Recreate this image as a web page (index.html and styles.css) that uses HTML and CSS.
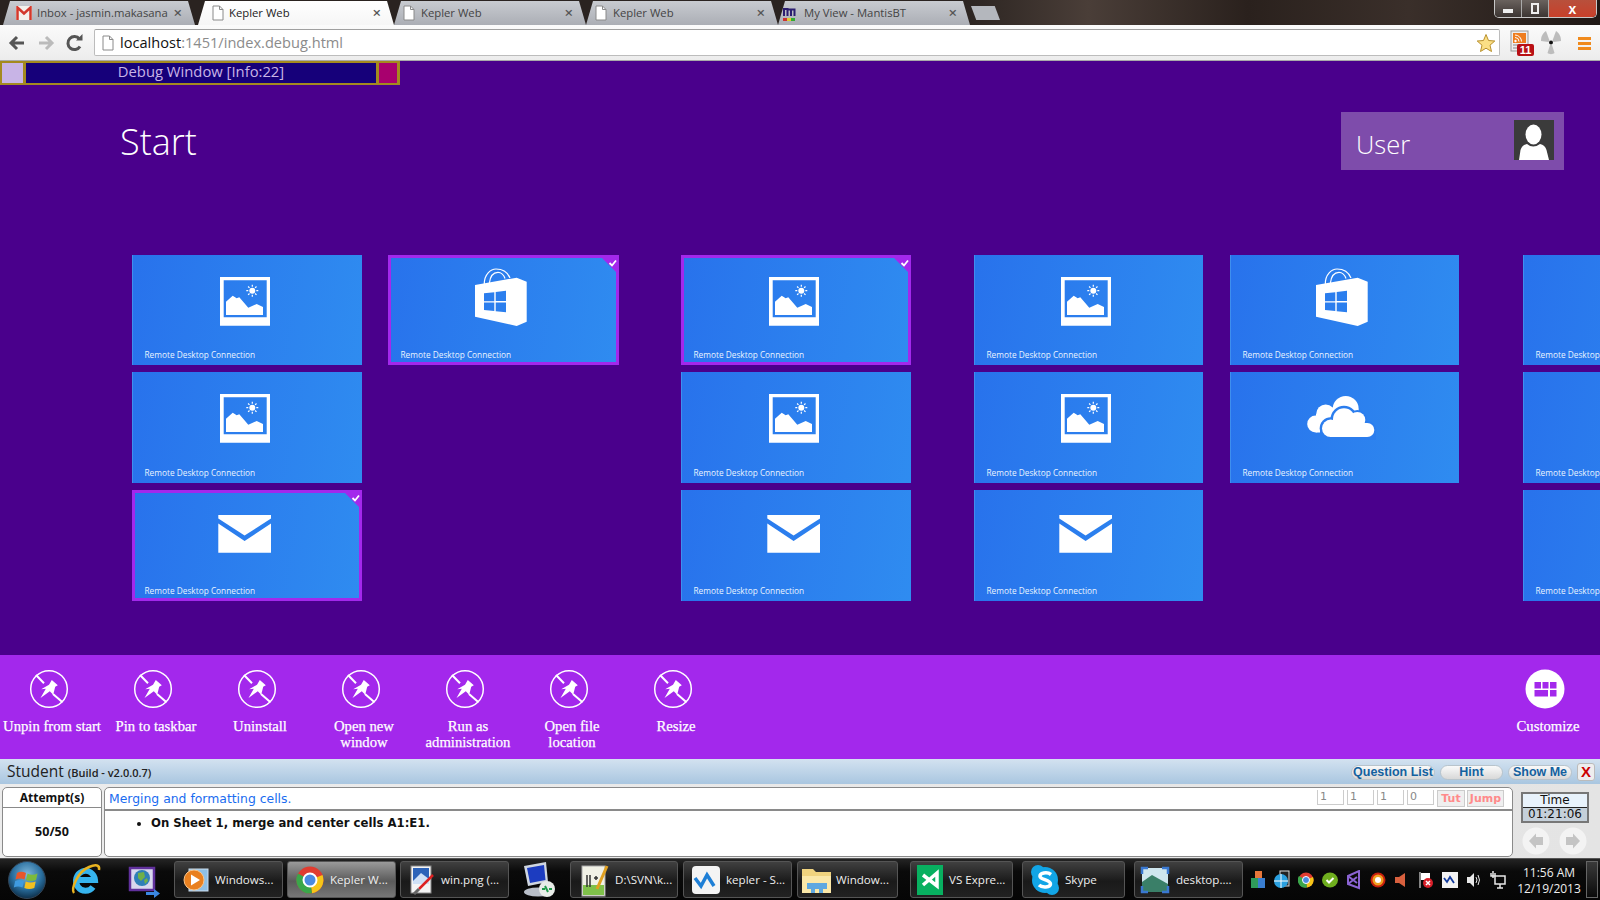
FILE: index.html
```html
<!DOCTYPE html>
<html lang="en">
<head>
    <meta charset="UTF-8">
    <title>Kepler Web</title>
    <link rel="stylesheet" href="styles.css">
</head>
<body>
    <svg class="defs" width="0" height="0">
        <symbol id="ic-photo" viewBox="0 0 72 72">
            <path fill="#fff" fill-rule="evenodd" d="M11 13h50v48.7H11z M14.7 16.3v37h43v-37z"/>
            <path fill="#fff" d="M17 37.7 23.7 31.7 27.7 34.3 30.3 33.3 39.3 43.7 47.7 40 54 43V51H17z"/>
            <circle cx="43.3" cy="26.7" r="3" fill="#fff"/>
            <path stroke="#fff" stroke-width="1.2" d="M43.3 20.7v2M43.3 30.700v2M37.300 26.700h2M47.300 26.700h2M39.100 22.500l1.400 1.400M46.100 29.500l1.400 1.400M47.500 22.500l-1.400 1.400M40.500 29.500l-1.400 1.400"/>
        </symbol>
        <symbol id="ic-store" viewBox="0 0 72 72">
            <path fill="#fff" fill-rule="evenodd" d="M10 21 51.700 13.700 61.700 17.700V57.700L51.700 62 10 52.700z M19 29.300V37.300H29.300V28.200z M30.700 28V37H41V26.700z M19 38.500V46L29.300 47V38.500z M30.700 38.500V47.200L41 48.300V38.500z"/>
            <path fill="none" stroke="#fff" stroke-width="1.2" d="M19.300 20.500C19 10 26 5 31 5 38 5 43 9 45 14M24.300 19.500C25 13 28 8.300 33 8.300 36 8.300 39 11 40 14.500"/>
        </symbol>
        <symbol id="ic-mail" viewBox="0 0 72 72">
            <path fill="#fff" d="M9.300 16H62V19.500L35.600 36.500 9.300 19.500z"/>
            <path fill="#fff" d="M9.300 24.500 35.600 42 62 24.500V53.700H9.300z"/>
        </symbol>
        <symbol id="ic-cloud" viewBox="0 0 72 72">
            <g fill="#fff">
                <circle cx="39.700" cy="28" r="13"/>
                <circle cx="19.700" cy="33" r="9.500"/>
                <circle cx="9.700" cy="43" r="8.500"/>
                <rect x="10" y="33" width="30" height="18.500"/>
            </g>
            <g fill="#2b7dee">
                <circle cx="38" cy="38.300" r="13.500"/>
                <circle cx="51.300" cy="39" r="10"/>
                <circle cx="24.700" cy="47.300" r="11"/>
                <circle cx="61.300" cy="49" r="9"/>
                <rect x="14" y="47" width="56" height="12"/>
            </g>
            <g fill="#fff">
                <circle cx="38" cy="38.300" r="11"/>
                <circle cx="51.300" cy="39" r="8"/>
                <circle cx="24.700" cy="47.300" r="8.700"/>
                <circle cx="61.300" cy="49" r="7"/>
                <rect x="24" y="42" width="37" height="14"/>
            </g>
        </symbol>
        <symbol id="ic-pin" viewBox="-20 -20 40 40">
            <circle r="18.300" fill="none" stroke="#fff" stroke-width="1.500"/>
            <path stroke="#fff" stroke-width="2" d="M-13-14-5-5.700M4 5 13.500 13.300"/>
            <path fill="#fff" d="M2.800-9 8.800-3.700 6.200-2.300 4.200 5.700 .8 2.300-8.500 9-3.200-.3-7.800.3 0-4.300z"/>
        </symbol>
        <symbol id="ic-page" viewBox="0 0 12 16">
            <path fill="#fff" stroke="#8a8a8a" d="M1 1h6.500L11 4.500V15H1z"/>
            <path fill="none" stroke="#8a8a8a" d="M7.500 1v3.500H11"/>
        </symbol>
    </svg>

    <div class="tabstrip">
        <div class="tab tab-mail">
            <svg class="favicon" width="16" height="14" viewBox="0 0 16 14"><rect width="16" height="14" fill="#f4f1ec"/><path fill="none" stroke="#d3382c" stroke-width="2.500" d="M1.500 14V1.500L8 7.500 14.500 1.500V14"/></svg>
            <span class="tab-label">Inbox - jasmin.makasana@</span>
            <span class="tab-close">×</span>
        </div>
        <div class="tab active">
            <svg class="favicon" width="12" height="16"><use href="#ic-page"/></svg>
            <span class="tab-label">Kepler Web</span>
            <span class="tab-close">×</span>
        </div>
        <div class="tab">
            <svg class="favicon" width="12" height="16"><use href="#ic-page"/></svg>
            <span class="tab-label">Kepler Web</span>
            <span class="tab-close">×</span>
        </div>
        <div class="tab">
            <svg class="favicon" width="12" height="16"><use href="#ic-page"/></svg>
            <span class="tab-label">Kepler Web</span>
            <span class="tab-close">×</span>
        </div>
        <div class="tab tab-mantis">
            <svg class="favicon" width="16" height="16" viewBox="0 0 16 16"><path fill="none" stroke="#2b1d70" stroke-width="2" d="M1 11V4H4.500V11M4.500 4.500H8V11M8 4.500H11.500V11"/><path stroke="#c33" stroke-width="3" d="M0 14.500h4"/><path stroke="#dc3" stroke-width="3" d="M4 14.500h4"/><path stroke="#3a3" stroke-width="3" d="M8 14.500h4"/></svg>
            <span class="tab-label">My View - MantisBT</span>
            <span class="tab-close">×</span>
        </div>
        <div class="newtab"></div>
        <div class="winctl">
            <span class="win-min"><i></i></span>
            <span class="win-max"><i></i></span>
            <span class="win-close">x</span>
        </div>
    </div>

    <div class="toolbar">
        <svg class="nav-ic" width="20" height="18" viewBox="0 0 20 18"><path fill="none" stroke="#555" stroke-width="3" d="M17 9H5M10 3 4 9l6 6"/></svg>
        <svg class="nav-ic" width="20" height="18" viewBox="0 0 20 18"><path fill="none" stroke="#bbb" stroke-width="3" d="M3 9h12M10 3l6 6-6 6"/></svg>
        <svg class="nav-ic" width="20" height="18" viewBox="0 0 20 18"><path fill="none" stroke="#555" stroke-width="3" d="M15 12.500A6.500 6.500 0 1 1 14.500 5"/><path fill="#555" d="M11 6.500h6.500V0z"/></svg>
        <div class="omnibox">
            <svg class="favicon" width="12" height="16"><use href="#ic-page"/></svg>
            <span class="url"><b>localhost</b>:1451/index.debug.html</span>
            <svg class="star" width="20" height="20" viewBox="0 0 20 20"><path fill="#fbdf85" stroke="#b8902c" d="M10 1.500 12.500 7.500 18.800 8 14 12.200 15.500 18.500 10 15.200 4.500 18.500 6 12.200 1.200 8 7.500 7.500z"/></svg>
        </div>
        <div class="ext">
            <svg width="24" height="26" viewBox="0 0 24 26"><rect x="1" y="1" width="17" height="20" fill="#eee" stroke="#999"/><rect x="3" y="3" width="13" height="10" fill="#ee7d1f"/><circle cx="5.500" cy="11" r="1.200" fill="#fff"/><path fill="none" stroke="#fff" d="M5 7.500a4 4 0 0 1 4 4M5 5a6.500 6.500 0 0 1 6.500 6.500"/><path stroke="#888" d="M3 15h10M3 18h10"/></svg>
            <span class="ext-badge">11</span>
        </div>
        <svg class="ext-rad" width="22" height="24" viewBox="0 0 22 24"><g fill="#bdbdbd"><path d="M1 10C1 5 3 2 6 0L9.500 9.500 8.500 11z"/><path d="M21 10C21 5 19 2 16 0L12.500 9.500 13.500 11z"/><path d="M7.500 22C9 23.500 13 23.500 14.500 22L12 14H10z"/></g><circle cx="11" cy="11.500" r="2" fill="#111"/></svg>
        <div class="menu-btn"><i></i><i></i><i></i></div>
    </div>

    <div class="stage">
        <div class="debug">
            <span class="debug-swatch"></span>
            <span class="debug-title">Debug Window [Info:22]</span>
            <span class="debug-close"></span>
        </div>

        <div class="stage-head">
            <h1>Start</h1>
            <div class="user">
                <span>User</span>
                <svg class="avatar" width="40" height="40" viewBox="0 0 40 40">
                    <rect width="40" height="40" fill="#3b3b3b"/>
                    <path fill="#fff" d="M5 40 6.500 30Q8 25 13 24 19 29 26 24 31 25 32.500 30L35 40z"/>
                    <ellipse cx="19.500" cy="14.500" rx="8" ry="10" fill="#fff"/>
                </svg>
            </div>
        </div>

        <div class="tiles">
            <div class="group group-a">
                <div class="col">
                    <div class="tile"><div class="tile-icon"><svg><use href="#ic-photo"/></svg></div><div class="tile-label">Remote Desktop Connection</div></div>
                    <div class="tile"><div class="tile-icon"><svg><use href="#ic-photo"/></svg></div><div class="tile-label">Remote Desktop Connection</div></div>
                    <div class="tile sel"><div class="tile-icon"><svg><use href="#ic-mail"/></svg></div><div class="tile-label">Remote Desktop Connection</div>
                        <svg class="check" width="17" height="17" viewBox="0 0 17 17"><path fill="#a328ec" d="M0 0H17V17z"/><path fill="none" stroke="#fff" stroke-width="1.800" d="M7.500 5 10 7.500 14 2.500"/></svg></div>
                </div>
                <div class="col col-wide">
                    <div class="tile sel"><div class="tile-icon"><svg><use href="#ic-store"/></svg></div><div class="tile-label">Remote Desktop Connection</div>
                        <svg class="check" width="17" height="17" viewBox="0 0 17 17"><path fill="#a328ec" d="M0 0H17V17z"/><path fill="none" stroke="#fff" stroke-width="1.800" d="M7.500 5 10 7.500 14 2.500"/></svg></div>
                </div>
            </div>
            <div class="group">
                <div class="col">
                    <div class="tile sel"><div class="tile-icon"><svg><use href="#ic-photo"/></svg></div><div class="tile-label">Remote Desktop Connection</div>
                        <svg class="check" width="17" height="17" viewBox="0 0 17 17"><path fill="#a328ec" d="M0 0H17V17z"/><path fill="none" stroke="#fff" stroke-width="1.800" d="M7.500 5 10 7.500 14 2.500"/></svg></div>
                    <div class="tile"><div class="tile-icon"><svg><use href="#ic-photo"/></svg></div><div class="tile-label">Remote Desktop Connection</div></div>
                    <div class="tile"><div class="tile-icon"><svg><use href="#ic-mail"/></svg></div><div class="tile-label">Remote Desktop Connection</div></div>
                </div>
            </div>
            <div class="group group-c">
                <div class="col col-narrow">
                    <div class="tile"><div class="tile-icon"><svg><use href="#ic-photo"/></svg></div><div class="tile-label">Remote Desktop Connection</div></div>
                    <div class="tile"><div class="tile-icon"><svg><use href="#ic-photo"/></svg></div><div class="tile-label">Remote Desktop Connection</div></div>
                    <div class="tile"><div class="tile-icon"><svg><use href="#ic-mail"/></svg></div><div class="tile-label">Remote Desktop Connection</div></div>
                </div>
                <div class="col col-narrow">
                    <div class="tile"><div class="tile-icon"><svg><use href="#ic-store"/></svg></div><div class="tile-label">Remote Desktop Connection</div></div>
                    <div class="tile"><div class="tile-icon"><svg><use href="#ic-cloud"/></svg></div><div class="tile-label">Remote Desktop Connection</div></div>
                </div>
            </div>
            <div class="group">
                <div class="col">
                    <div class="tile"><div class="tile-label tile-only">Remote Desktop Connection</div></div>
                    <div class="tile"><div class="tile-label tile-only">Remote Desktop Connection</div></div>
                    <div class="tile"><div class="tile-label tile-only">Remote Desktop Connection</div></div>
                </div>
            </div>
        </div>
    </div>

    <div class="appbar">
        <div class="action"><svg class="pin"><use href="#ic-pin"/></svg><span>Unpin from start</span></div>
        <div class="action"><svg class="pin"><use href="#ic-pin"/></svg><span>Pin to taskbar</span></div>
        <div class="action"><svg class="pin"><use href="#ic-pin"/></svg><span>Uninstall</span></div>
        <div class="action"><svg class="pin"><use href="#ic-pin"/></svg><span>Open new<br>window</span></div>
        <div class="action"><svg class="pin"><use href="#ic-pin"/></svg><span>Run as<br>administration</span></div>
        <div class="action"><svg class="pin"><use href="#ic-pin"/></svg><span>Open file<br>location</span></div>
        <div class="action"><svg class="pin"><use href="#ic-pin"/></svg><span>Resize</span></div>
        <div class="action customize">
            <svg class="pin" viewBox="0 0 40 40"><circle cx="20" cy="20" r="19.500" fill="#fff"/><path fill="#a328ec" d="M9.500 13h6.500v6.500H9.500zM17.500 13h6v6.500h-6zM25 13h6.500v6.500H25zM9.500 21h13.500v6.500H9.500zM25 21h6.500v6.500H25z"/></svg>
            <span>Customize</span>
        </div>
    </div>

    <div class="student">
        <div class="student-bar">
            <div class="student-title">Student <small>(Build - v2.0.0.7)</small></div>
            <div class="student-btns">
                <button class="pill pill-list">Question List</button>
                <button class="pill pill-hint">Hint</button>
                <button class="pill pill-show">Show Me</button>
                <button class="pill-x">X</button>
            </div>
        </div>
        <div class="student-body">
            <div class="attempts">
                <div class="attempts-head">Attempt(s)</div>
                <div class="attempts-val">50/50</div>
            </div>
            <div class="question">
                <div class="question-head">
                    <span class="question-title">Merging and formatting cells.</span>
                    <span class="cnt">1</span><span class="cnt">1</span><span class="cnt">1</span><span class="cnt">0</span>
                    <span class="qbtn qbtn-tut">Tut</span><span class="qbtn qbtn-jump">Jump</span>
                </div>
                <ul class="question-body">
                    <li>On Sheet 1, merge and center cells A1:E1.</li>
                </ul>
            </div>
            <div class="side">
                <div class="timer">
                    <div class="timer-head">Time</div>
                    <div class="timer-val">01:21:06</div>
                </div>
                <div class="side-nav">
                    <svg width="28" height="28" viewBox="0 0 28 28"><circle cx="14" cy="14" r="13.500" fill="#f3f3f3"/><path fill="#c4c4c4" d="M7 14 14 6.500V10H21V18H14V21.500z"/></svg>
                    <svg width="28" height="28" viewBox="0 0 28 28"><circle cx="14" cy="14" r="13.500" fill="#f3f3f3"/><path fill="#c4c4c4" d="M21 14 14 6.500V10H7V18H14V21.500z"/></svg>
                </div>
            </div>
        </div>
    </div>

    <div class="taskbar">
        <svg class="orb" width="38" height="38" viewBox="0 0 38 38">
            <defs><radialGradient id="orbfill" cx="50%" cy="35%" r="65%"><stop offset="0" stop-color="#7fb8dc"/><stop offset=".6" stop-color="#2a6f9f"/><stop offset="1" stop-color="#0d2f4a"/></radialGradient></defs>
            <circle cx="19" cy="19" r="18.500" fill="url(#orbfill)" stroke="#345"/>
            <path fill="#e8562a" d="M9 12Q13 9.500 18 12L16.500 18.500Q12 16.500 7.500 18.500z"/>
            <path fill="#7dbb3c" d="M19.500 12.500Q24 15 29.500 12.500L28 19Q23 21 18 19z"/>
            <path fill="#3f9be0" d="M7.200 20Q12 18 16 20L14.500 26.500Q10 24.500 5.800 26.500z"/>
            <path fill="#f4c020" d="M17.700 20.500Q22.500 22.500 27.700 20.500L26.300 27Q21 29 16.300 27z"/>
        </svg>
        <svg class="tb-launch" width="34" height="36" viewBox="0 0 34 36">
            <path fill="none" stroke="#36b4ee" stroke-width="6" d="M8 18H26A9.500 10 0 1 0 24 25"/>
            <path fill="none" stroke="#e9b320" stroke-width="2.500" d="M5 31C2 27 8 10 20 5 27 2 31 3 30 8"/>
        </svg>
        <svg class="tb-launch" width="34" height="36" viewBox="0 0 34 36">
            <rect x="4" y="6" width="24" height="22" fill="#d8d8ee" stroke="#60309c" stroke-width="2.500"/>
            <circle cx="16" cy="16" r="8" fill="#2f7fb8"/>
            <path fill="#6fb04a" d="M12 11 18 10 19 15 15 19 12 16zM18 18l3-2 1 3-3 3z"/>
            <path fill="#3a86e0" d="M20 30h8v-3l6 4.500-6 4.500v-3h-8z"/>
        </svg>
        <div class="tb-btn btn-a">
            <svg width="26" height="26" viewBox="0 0 26 26"><rect x="6" y="2" width="19" height="22" fill="#8fc0e4" stroke="#cde"/><circle cx="11" cy="13" r="10" fill="#e9801f" stroke="#f9c48a"/><path fill="#fff" d="M8 7.500 17 13 8 18.500z"/></svg>
            <span>Windows...</span>
        </div>
        <div class="tb-btn active">
            <svg width="28" height="28" viewBox="0 0 28 28"><circle cx="14" cy="14" r="13.500" fill="#e03c30"/><path fill="#f5c518" d="M14 14 26.500 9A13.500 13.500 0 0 1 16 27.300z"/><path fill="#3aa64a" d="M14 14 16 27.300A13.500 13.500 0 0 1 2 7.500z"/><circle cx="14" cy="14" r="6.500" fill="#4a8ae0" stroke="#fff" stroke-width="2"/></svg>
            <span>Kepler W...</span>
        </div>
        <div class="tb-btn">
            <svg width="26" height="30" viewBox="0 0 26 30"><rect x="2" y="1" width="20" height="27" fill="#f4f4f4" stroke="#888"/><rect x="4" y="3" width="16" height="16" fill="#2d63b8"/><path fill="#cfe0f5" d="M4 16 12 8 20 14V19H4z"/><path stroke="#d22" stroke-width="2.500" d="M24 10 10 24"/><path stroke="#666" stroke-width="3" d="M10 24 5 29"/></svg>
            <span>win.png (...</span>
        </div>
        <svg class="tb-launch launch4" width="34" height="36" viewBox="0 0 34 36">
            <path fill="#cfd6e0" d="M2 4 24 0 26 20 6 24z"/>
            <path fill="#1c3cc0" d="M5 6 22 3 23.500 18 8 21z"/>
            <ellipse cx="16" cy="30" rx="14" ry="4.500" fill="#b8bec8"/>
            <circle cx="25" cy="27" r="8" fill="#e8ece8"/>
            <path fill="none" stroke="#1f9a4a" stroke-width="2" d="M20 27h3M27 27h3M23 24l3 6"/>
        </svg>
        <div class="tb-btn btn-d">
            <svg width="30" height="34" viewBox="0 0 30 34"><rect x="3" y="3" width="23" height="30" fill="#f1f1e6" stroke="#aaa"/><rect x="4" y="22" width="21" height="10" fill="#7fc04a"/><path stroke="#333" stroke-width="1.500" d="M8 12V24M11 12V24M15 15h4M17 13v4"/><path stroke="#e0a020" stroke-width="3" d="M28 3 18 26"/></svg>
            <span>D:\SVN\k...</span>
        </div>
        <div class="tb-btn btn-e">
            <svg width="28" height="28" viewBox="0 0 28 28"><rect width="28" height="28" rx="4" fill="#f4f4f4"/><path fill="none" stroke="#1e7fd6" stroke-width="3.500" d="M3 12 9 20 15 9 22 20"/></svg>
            <span>kepler - S...</span>
        </div>
        <div class="tb-btn btn-f">
            <svg width="32" height="30" viewBox="0 0 32 30"><path fill="#f0d37e" d="M1 4H12L15 7H30V27H1z"/><path fill="#fbe8a8" d="M1 11H30V28H1z"/><path fill="#5fa8e0" d="M6 18H26V24H22V28H18V24H14V28H10V24H6z"/></svg>
            <span>Window...</span>
        </div>
        <div class="tb-btn btn-g">
            <svg width="26" height="30" viewBox="0 0 26 30"><rect width="26" height="30" fill="#08b060"/><path fill="none" stroke="#fff" stroke-width="3.500" d="M6 10 20 21V8L6 20"/></svg>
            <span>VS Expre...</span>
        </div>
        <div class="tb-btn btn-h">
            <svg width="28" height="30" viewBox="0 0 28 30"><circle cx="14" cy="15" r="13" fill="#12a5e6"/><circle cx="7" cy="7" r="7" fill="#12a5e6"/><circle cx="21" cy="23" r="7" fill="#12a5e6"/><path fill="none" stroke="#fff" stroke-width="3.500" d="M20 9.500C16 6.500 8.500 8 9 11.500 9.500 15 19.500 14.500 19.500 19 19.500 22.500 11 23 8 20"/></svg>
            <span>Skype</span>
        </div>
        <div class="tb-btn btn-i">
            <svg width="30" height="28" viewBox="0 0 30 28"><rect x="2" y="2" width="26" height="24" fill="#cfe6ee"/><path fill="#3a7f68" d="M2 16 12 9 28 18V26H2z"/><path fill="none" stroke="#3a78d0" stroke-width="2.500" d="M2 8V2H8M22 2H28V8M28 20V26H22M8 26H2V20"/></svg>
            <span>desktop....</span>
        </div>

        <div class="tray">
            <svg width="16" height="20" viewBox="0 0 16 20"><rect x="5" y="1" width="7" height="7" fill="#e8763a"/><rect x="1" y="8" width="7" height="10" fill="#2f9a5a"/><rect x="8" y="8" width="7" height="10" fill="#3a7ed0"/></svg>
            <svg width="16" height="20" viewBox="0 0 16 20"><rect x="6" y="1" width="9" height="15" fill="#222" stroke="#ddd"/><circle cx="7" cy="11" r="7" fill="#2aa0e0"/><path stroke="#fff" d="M0 11h14M7 4v14"/></svg>
            <svg width="16" height="20" viewBox="0 0 16 20"><circle cx="8" cy="10" r="7.500" fill="#e03c30"/><path fill="#f5c518" d="M8 10 15 7A7.500 7.500 0 0 1 9 17.400z"/><path fill="#3aa64a" d="M8 10 9 17.400A7.500 7.500 0 0 1 1 6z"/><circle cx="8" cy="10" r="3.500" fill="#4a8ae0" stroke="#fff"/></svg>
            <svg width="16" height="20" viewBox="0 0 16 20"><ellipse cx="8" cy="10" rx="8" ry="7.500" fill="#6fae1e"/><path fill="none" stroke="#fff" stroke-width="2" d="M4.500 10 7 12.500 11.500 8"/></svg>
            <svg width="16" height="20" viewBox="0 0 16 20"><path fill="none" stroke="#8a63d2" stroke-width="2" d="M2 6 13 1V18L2 14zM2 6 11 13M2 14 11 7"/></svg>
            <svg width="16" height="20" viewBox="0 0 16 20"><circle cx="8" cy="10" r="7.500" fill="#c8200c"/><circle cx="8" cy="10" r="5.500" fill="#f0a020"/><circle cx="8" cy="10" r="3" fill="#fff"/></svg>
            <svg width="16" height="20" viewBox="0 0 16 20"><path fill="#d8603e" d="M1 7H5L11 3V17L5 13H1z"/></svg>
            <svg width="16" height="20" viewBox="0 0 16 20"><path stroke="#fff" d="M2 2V18"/><path fill="#fff" d="M3 3H12V10H3z"/><circle cx="10" cy="13" r="5" fill="#d8202a"/><path stroke="#fff" stroke-width="1.500" d="M8 11l4 4M12 11l-4 4"/></svg>
            <svg width="16" height="20" viewBox="0 0 16 20"><rect y="2" width="16" height="16" fill="#f2f2f2"/><path fill="none" stroke="#123a9c" stroke-width="1.800" d="M2 8 5 12 8 7 12 13"/></svg>
            <svg width="16" height="20" viewBox="0 0 16 20"><path fill="#e8e8e8" d="M1 7H4L8 3V17L4 13H1z"/><path fill="none" stroke="#e8e8e8" d="M10 7Q12 10 10 13M12 5Q15 10 12 15"/></svg>
            <svg width="16" height="20" viewBox="0 0 16 20"><path fill="none" stroke="#e8e8e8" stroke-width="1.500" d="M5 6H15V14H5zM7 18H13M10 14V18M3 1V8M1 3V6H5V3"/></svg>
            <div class="clock">
                <div>11:56 AM</div>
                <div>12/19/2013</div>
            </div>
            <div class="show-desktop"></div>
        </div>
    </div>
</body>
</html>
```

FILE: styles.css
```css
* {
    box-sizing: border-box;
    margin: 0;
    padding: 0;
}
html, body {
    width: 1600px;
    height: 900px;
    overflow: hidden;
}
body {
    display: flex;
    flex-direction: column;
    font-family: 'Open Sans', sans-serif;
    background: #4a008c;
}
svg { display: block; flex: none; }
.defs { position: absolute; }

/* browser chrome */
.tabstrip {
    height: 25px;
    flex: none;
    display: flex;
    align-items: flex-end;
    padding: 0 3px;
    background: linear-gradient(90deg, #2a2320 0, #2a2320 60%, #4a3e38 68%, #2a211d 78%, #3a2f2a 88%, #1f1815 100%);
}
.tab {
    width: 192px;
    height: 24px;
    display: flex;
    align-items: center;
    gap: 6px;
    padding: 0 13px 1px 9px;
    font-size: 11.300px;
    color: #444;
    background: linear-gradient(#c8cbd0, #abaeb5);
    clip-path: polygon(0 100%, 7px 0, calc(100% - 7px) 0, 100% 100%);
}
.tab.active {
    width: 196px;
    margin-left: 3px;
    gap: 5px;
    padding-left: 14px;
    background: linear-gradient(#fff, #f6f6f6);
    color: #222;
}
.tab-mail { padding-left: 13px; gap: 5px; }
.tab-mantis { padding-left: 5px; gap: 5px; }
.tab-label {
    flex: 1;
    min-width: 0;
    overflow: hidden;
    white-space: nowrap;
}
.tab-close {
    font-size: 15px;
    font-weight: 600;
    color: #555;
    line-height: 1;
}
.newtab {
    width: 29px;
    height: 14px;
    margin: 0 0 5px 1px;
    background: #b4b7bd;
    clip-path: polygon(0 0, 82% 0, 100% 100%, 18% 100%);
}
.winctl {
    margin-left: auto;
    align-self: flex-start;
    width: 103px;
    height: 18px;
    display: flex;
    border: 1px solid #c8c8c8;
    border-top: none;
    border-radius: 0 0 5px 5px;
    overflow: hidden;
}
.winctl span {
    display: flex;
    align-items: center;
    justify-content: center;
    background: linear-gradient(#6a625e, #3c3532);
    border-right: 1px solid #aaa;
}
.win-min, .win-max { width: 27px; }
.win-min i { width: 10px; height: 4px; background: #eee; margin-top: 4px; }
.win-max i { width: 8px; height: 11px; border: 2px solid #eee; }
.winctl .win-close {
    flex: 1;
    border-right: none;
    background: linear-gradient(#b8503c, #c8402a);
    color: #fff;
    font: bold 14px/16px 'Liberation Sans', sans-serif;
}

.toolbar {
    height: 36px;
    flex: none;
    display: flex;
    align-items: center;
    padding-left: 7px;
    gap: 9px;
    background: linear-gradient(#fbfbfb, #ececec);
    border-bottom: 1px solid #aaa;
}
.omnibox {
    flex: none;
    width: 1406px;
    height: 27px;
    display: flex;
    align-items: center;
    gap: 6px;
    padding: 0 3px 0 7px;
    background: #fff;
    border: 1px solid #bcbcbc;
    border-top-color: #a0a0a0;
    border-radius: 2px;
    font-size: 14.600px;
    color: #8b8b8b;
}
.url { flex: 1; line-height: 18px; margin-top: -2px; }
.url b { font-weight: 400; color: #111; }
.ext { position: relative; margin-left: 1px; }
.ext-badge {
    position: absolute;
    right: 0;
    top: 14px;
    width: 17px;
    height: 12px;
    background: #b80f14;
    border-radius: 2px;
    color: #fff;
    font: bold 11px/12px 'Liberation Sans', sans-serif;
    text-align: center;
}
.ext-rad { margin-left: -3px; }
.menu-btn { margin-left: 7px; width: 13px; padding-top: 3px; }
.menu-btn i {
    display: block;
    height: 3px;
    margin-bottom: 2px;
    background: #f08a1c;
}

/* start screen */
.stage {
    flex: none;
    height: 594px;
    overflow: hidden;
    background: #4a008c;
}
.debug {
    width: 400px;
    height: 24px;
    display: flex;
    gap: 3px;
    background: #a48a1f;
    padding: 2px 3px 2px 2px;
}
.debug-swatch { width: 21px; background: #c8b4e6; }
.debug-title {
    width: 350px;
    background: #16007a;
    color: #c8b4e6;
    font-size: 14.800px;
    line-height: 16px;
    text-align: center;
}
.debug-close { flex: 1; background: #a8006e; }
.stage-head {
    display: flex;
    justify-content: space-between;
    margin-top: 27px;
    height: 58px;
    padding: 0 36px 0 120px;
}
h1 {
    font-weight: 300;
    font-size: 36px;
    line-height: 60px;
    color: #fff;
}
.user {
    width: 223px;
    display: flex;
    align-items: center;
    justify-content: space-between;
    padding: 0 10px 0 15px;
    background: #7e4cab;
    color: #fff;
    font-weight: 300;
    font-size: 25.500px;
}
.user span { margin-top: 6px; }
.avatar { margin-top: -2px; }
.tiles {
    display: flex;
    gap: 63px;
    margin-top: 85px;
    padding-left: 132px;
}
.group { display: flex; gap: 26px; }
.group-a { margin-right: -1px; }
.group-c { gap: 27px; margin-right: 1px; }
.col {
    display: flex;
    flex-direction: column;
    gap: 7px;
    width: 230px;
    flex: none;
}
.col-wide { width: 231px; }
.col-narrow { width: 229px; }
.tile {
    position: relative;
    height: 111px;
    background: linear-gradient(100deg, #2872ec, #2f8cf0);
    box-shadow: inset 1px 0 0 #3f8fee;
    overflow: hidden;
}
.tile:first-child { height: 110px; }
.tile.sel { box-shadow: inset 0 0 0 3px #a328ec; }
.tile-icon {
    height: 90px;
    display: flex;
    align-items: center;
    justify-content: center;
    padding-right: 5px;
}
.tile-icon svg { width: 72px; height: 72px; }
.tile-label {
    margin-top: 4px;
    padding-left: 12.500px;
    font-size: 8.300px;
    line-height: 14px;
    color: #e8f4ff;
    white-space: nowrap;
}
.tile:first-child .tile-label { margin-top: 3px; }
.tile-only, .tile .tile-only { margin-top: 94px; }
.tile:first-child .tile-only { margin-top: 93px; }
.check {
    position: absolute;
    top: 3px;
    right: 0;
}

/* app bar */
.appbar {
    height: 104px;
    flex: none;
    display: flex;
    padding: 14px 2px 0 0;
    background: #a328ec;
    font-family: 'Liberation Serif', serif;
    font-size: 14.700px;
    line-height: 16px;
    color: #fff;
    -webkit-text-stroke: 0.250px #fff;
    text-align: center;
}
.action {
    width: 104px;
    flex: none;
    display: flex;
    flex-direction: column;
    align-items: center;
    gap: 9px;
}
.action span { padding-left: 6px; white-space: nowrap; }
.action .pin { width: 40px; height: 40px; }
.action:first-child { margin-left: -3px; }
.customize { margin-left: auto; width: 100px; }
.customize .pin { margin-right: 7px; }
.customize span { padding-left: 0; }

/* student panel */
.student {
    height: 99px;
    flex: none;
    display: flex;
    flex-direction: column;
    background: linear-gradient(90deg, #ececec, #e4e4e4);
}
.student-bar {
    height: 25px;
    flex: none;
    display: flex;
    justify-content: space-between;
    align-items: center;
    padding: 2px 5px 0 7px;
    background: linear-gradient(#d3e2f0, #a9c6e0);
}
.student-title {
    font-size: 15.500px;
    margin-top: -4px;
    color: #222;
}
.student-title small {
    font-size: 11px;
    font-weight: 600;
}
.student-btns { display: flex; align-items: center; gap: 5px; }
.pill {
    height: 15px;
    flex: none;
    padding: 0;
    border: 1px solid #b8c4cc;
    border-radius: 8px;
    background: linear-gradient(#fafafa, #d8d8d8);
    color: #14619f;
    font: bold 12.500px/13px 'Liberation Sans', sans-serif;
    white-space: nowrap;
}
.pill-list { width: 84px; }
.pill-hint { width: 63px; }
.pill-show { width: 64px; }
.pill-x {
    width: 18px;
    height: 18px;
    flex: none;
    margin-top: -2px;
    border: 1px solid #bbb;
    border-radius: 3px;
    background: #eee;
    color: #c00;
    font: bold 15px/15px 'Liberation Sans', sans-serif;
}
.student-body {
    height: 74px;
    flex: none;
    display: flex;
    gap: 2px;
    padding: 3px 0 1px 2px;
}
.attempts {
    width: 100px;
    height: 70px;
    background: #fff;
    border: 1px solid #8a8a8a;
    border-radius: 5px;
    font-family: 'Noto Sans', sans-serif;
    font-weight: 700;
    font-size: 12px;
    text-align: center;
    color: #111;
}
.attempts-head {
    height: 20px;
    line-height: 20px;
    border-bottom: 1px solid #8a8a8a;
}
.attempts-val { font-size: 12.500px; line-height: 47px; height: 47px; }
.question {
    width: 1409px;
    height: 70px;
    background: #fff;
    border: 1px solid #8a8a8a;
    border-radius: 5px;
    font-family: 'DejaVu Sans', sans-serif;
}
.question-head {
    height: 23px;
    display: flex;
    gap: 3px;
    padding: 2px 8px 0 4px;
    border-bottom: 2px solid #8a8a8a;
}
.question-title {
    flex: 1;
    color: #1a6cf0;
    font-size: 12.400px;
    line-height: 18px;
}
.cnt {
    width: 27px;
    height: 15px;
    border: 1px solid #ccc;
    border-top: none;
    padding-left: 2px;
    font-size: 11px;
    line-height: 13px;
    color: #888;
}
.qbtn {
    height: 17px;
    background: #efefef;
    border: 1px solid #ccc;
    color: #ff8a8a;
    font-size: 11px;
    font-weight: 700;
    line-height: 15px;
    text-align: center;
}
.qbtn-tut { width: 28px; }
.qbtn-jump { width: 37px; margin-left: -1px; }
.question-body {
    padding: 5px 0 0 46px;
    font-size: 11.700px;
    font-weight: 700;
    color: #111;
}
.side { width: 68px; margin: 5px 0 0 6px; }
.timer {
    border: 2px solid #777;
    font-family: 'DejaVu Sans', sans-serif;
    font-size: 12px;
    text-align: center;
    color: #111;
    line-height: 13px;
}
.timer-head { background: #e8f2fb; border-bottom: 1px solid #222; }
.timer-val { background: #c5d0da; height: 13px; }
.side-nav {
    display: flex;
    justify-content: space-between;
    padding: 4px 2px 0 1px;
}

/* windows taskbar */
.taskbar {
    height: 42px;
    flex: none;
    display: flex;
    align-items: center;
    padding-left: 8px;
    background: linear-gradient(#242424, #0a0a0a 30%, #050505);
    border-top: 1px solid #555;
    color: #eee;
    font-size: 11.600px;
}
.tb-launch { margin-left: 23px; }
.launch4 { margin-left: 13px; }
.tb-btn {
    height: 37px;
    width: 109px;
    margin-left: 4px;
    display: flex;
    align-items: center;
    gap: 6px;
    padding-left: 8px;
    border: 1px solid #555;
    border-radius: 3px;
    background: linear-gradient(#404040, #1a1a1a 55%, #222);
    white-space: nowrap;
}
.tb-btn.active { background: linear-gradient(#9a9a9a, #5a5a5a 55%, #777); }
.btn-a { margin-left: 14px; }
.btn-d { margin-left: 14px; width: 108px; }
.btn-e { margin-left: 5px; }
.btn-f { margin-left: 5px; width: 101px; padding-left: 3px; gap: 3px; }
.btn-g { margin-left: 12px; width: 103px; padding-left: 6px; }
.btn-h { margin-left: 9px; width: 103px; }
.btn-i { margin-left: 9px; padding-left: 5px; }
.tray {
    margin-left: 7px;
    display: flex;
    align-items: center;
    gap: 8px;
    flex: 1;
}
.clock {
    width: 66px;
    margin: 2px 0 0 2px;
    text-align: center;
    line-height: 16px;
    font-size: 12px;
    white-space: nowrap;
}
.show-desktop {
    width: 12px;
    height: 37px;
    margin-left: -4px;
    border: 1px solid #666;
    background: linear-gradient(#3a3a3a, #0a0a0a);
}
```
